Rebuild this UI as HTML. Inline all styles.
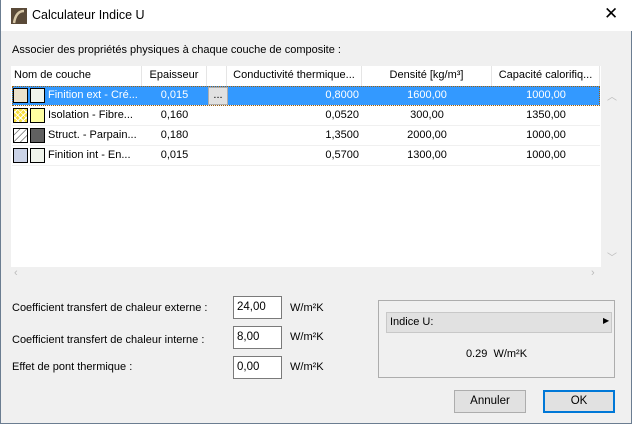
<!DOCTYPE html>
<html><head><style>
*{box-sizing:border-box;margin:0;padding:0}
body{width:632px;height:424px;overflow:hidden;font-family:"Liberation Sans",sans-serif;font-size:11px;color:#000;background:#f0f0f0;position:relative}
.win{position:absolute;left:0;top:0;width:632px;height:424px;border:1px solid #6b7d91;border-top:none;background:#f0f0f0}
.title{position:absolute;left:0;top:0;width:631px;height:31px;background:#fff}
.abs{position:absolute;white-space:nowrap}
.tbl{position:absolute;left:10px;top:66px;width:611px;height:215px;background:#fff}
.hdr{position:absolute;top:0;height:20px;line-height:19px;border-right:1px solid #e5e5e5;background:#fff;text-align:center}
.row{position:absolute;left:1px;width:588px;height:20px;border-bottom:1px solid #f0f0f0;line-height:19px}
.sel{background:#3399ff;color:#fff;outline:1px dotted #a0600d;outline-offset:-1px}
.c{position:absolute;top:0;text-align:center}
.sw{position:absolute;top:2px;width:15px;height:15px;border:1px solid #000}
.inp{position:absolute;left:232px;width:49px;height:23px;border:1px solid #7a7a7a;background:#fff;padding-left:3px;line-height:21px;font-size:11.5px}
.btn{position:absolute;top:390px;width:72px;height:23px;border:1px solid #adadad;background:#e1e1e1;text-align:center;line-height:21px;font-size:11.5px}
</style></head><body>
<div class="win">
<div class="title">
 <svg class="abs" style="left:10px;top:8px" width="16" height="16"><rect width="16" height="16" fill="#5a4a38"/><path d="M3 15 Q5 3 13 3" stroke="#d8c8a8" stroke-width="2.5" fill="none"/></svg>
 <div class="abs" style="left:31px;top:8px;font-size:12.5px">Calculateur Indice U</div>
 <div class="abs" style="left:603px;top:4px;font-size:17px">✕</div>
</div>
<div class="abs" style="left:11px;top:44px">Associer des propriétés physiques à chaque couche de composite :</div>
<div class="tbl">
 <div class="hdr" style="left:0;width:131px;text-align:left;padding-left:3px">Nom de couche</div>
 <div class="hdr" style="left:131px;width:65px">Epaisseur</div>
 <div class="hdr" style="left:196px;width:20px"></div>
 <div class="hdr" style="left:216px;width:135px">Conductivité thermique...</div>
 <div class="hdr" style="left:351px;width:130px">Densité [kg/m³]</div>
 <div class="hdr" style="left:481px;width:108px">Capacité calorifiq...</div>

 <div class="row sel" style="top:20px">
  <div class="sw" style="left:1px;background:#fff;background-image:radial-gradient(#b08830 40%,transparent 45%);background-size:2px 2px"></div>
  <div class="sw" style="left:18px;background:#f0f4ec"></div>
  <div class="abs" style="left:36px">Finition ext - Cré...</div>
  <div class="c" style="left:130px;width:65px">0,015</div>
  <div class="c" style="left:196px;width:20px;top:1px;height:18px;background:#e1e1e1;border:1px solid #adadad;color:#000;line-height:14px">...</div>
  <div class="abs" style="left:216px;width:131px;text-align:right">0,8000</div>
  <div class="c" style="left:350px;width:130px">1600,00</div>
  <div class="c" style="left:480px;width:108px">1000,00</div>
 </div>
 <div class="row" style="top:40px">
  <div class="sw" style="left:1px;background:#f8e040;background-image:repeating-linear-gradient(45deg,transparent 0 3px,#fff 3px 4px),repeating-linear-gradient(-45deg,transparent 0 3px,#fff 3px 4px)"></div>
  <div class="sw" style="left:18px;background:#ffffa0"></div>
  <div class="abs" style="left:36px">Isolation - Fibre...</div>
  <div class="c" style="left:130px;width:65px">0,160</div>
  <div class="abs" style="left:216px;width:131px;text-align:right">0,0520</div>
  <div class="c" style="left:350px;width:130px">300,00</div>
  <div class="c" style="left:480px;width:108px">1350,00</div>
 </div>
 <div class="row" style="top:60px">
  <div class="sw" style="left:1px;background:#fff linear-gradient(135deg,transparent 20%,#444 22%,transparent 26%,transparent 46%,#444 48%,transparent 52%,transparent 72%,#444 74%,transparent 78%)"></div>
  <div class="sw" style="left:18px;background:#606060"></div>
  <div class="abs" style="left:36px">Struct. - Parpain...</div>
  <div class="c" style="left:130px;width:65px">0,180</div>
  <div class="abs" style="left:216px;width:131px;text-align:right">1,3500</div>
  <div class="c" style="left:350px;width:130px">2000,00</div>
  <div class="c" style="left:480px;width:108px">1000,00</div>
 </div>
 <div class="row" style="top:80px">
  <div class="sw" style="left:1px;background:#fff;background-image:radial-gradient(#3050a0 40%,transparent 45%);background-size:2px 2px"></div>
  <div class="sw" style="left:18px;background:#f0f4ec"></div>
  <div class="abs" style="left:36px">Finition int - En...</div>
  <div class="c" style="left:130px;width:65px">0,015</div>
  <div class="abs" style="left:216px;width:131px;text-align:right">0,5700</div>
  <div class="c" style="left:350px;width:130px">1300,00</div>
  <div class="c" style="left:480px;width:108px">1000,00</div>
 </div>
 <div class="abs" style="left:0;top:201px;width:611px;height:14px;background:#f0f0f0"></div>
 <div class="abs" style="left:590px;top:0;width:21px;height:201px;background:#f0f0f0"></div>
 <div class="abs" style="left:596px;top:22px;color:#bbb;font-size:10px">︿</div>
 <div class="abs" style="left:596px;top:183px;color:#bbb;font-size:10px">﹀</div>
 <div class="abs" style="left:3px;top:201px;color:#bbb">‹</div>
 <div class="abs" style="left:580px;top:201px;color:#bbb">›</div>
</div>

<div class="abs" style="left:11px;top:302px">Coefficient transfert de chaleur externe :</div>
<div class="abs" style="left:11px;top:334px">Coefficient transfert de chaleur interne :</div>
<div class="abs" style="left:11px;top:361px">Effet de pont thermique :</div>
<div class="inp" style="top:296px">24,00</div>
<div class="inp" style="top:326px">8,00</div>
<div class="inp" style="top:356px">0,00</div>
<div class="abs" style="left:289px;top:302px">W/m²K</div>
<div class="abs" style="left:289px;top:331px">W/m²K</div>
<div class="abs" style="left:289px;top:361px">W/m²K</div>

<div class="abs" style="left:377px;top:300px;width:237px;height:78px;border:1px solid #adadad"></div>
<div class="abs" style="left:385px;top:312px;width:226px;height:21px;border:1px solid #c8c8c8;background:#e1e1e1;line-height:19px;padding-left:3px">Indice U:</div>
<div class="abs" style="left:602px;top:316px;font-size:8px">▶</div>
<div class="abs" style="left:377px;top:348px;width:237px;text-align:center">0.29&nbsp; W/m²K</div>

<div class="btn" style="left:453px">Annuler</div>
<div class="btn" style="left:542px;border:2px solid #0078d7;line-height:19px">OK</div>
</div>
</body></html>
